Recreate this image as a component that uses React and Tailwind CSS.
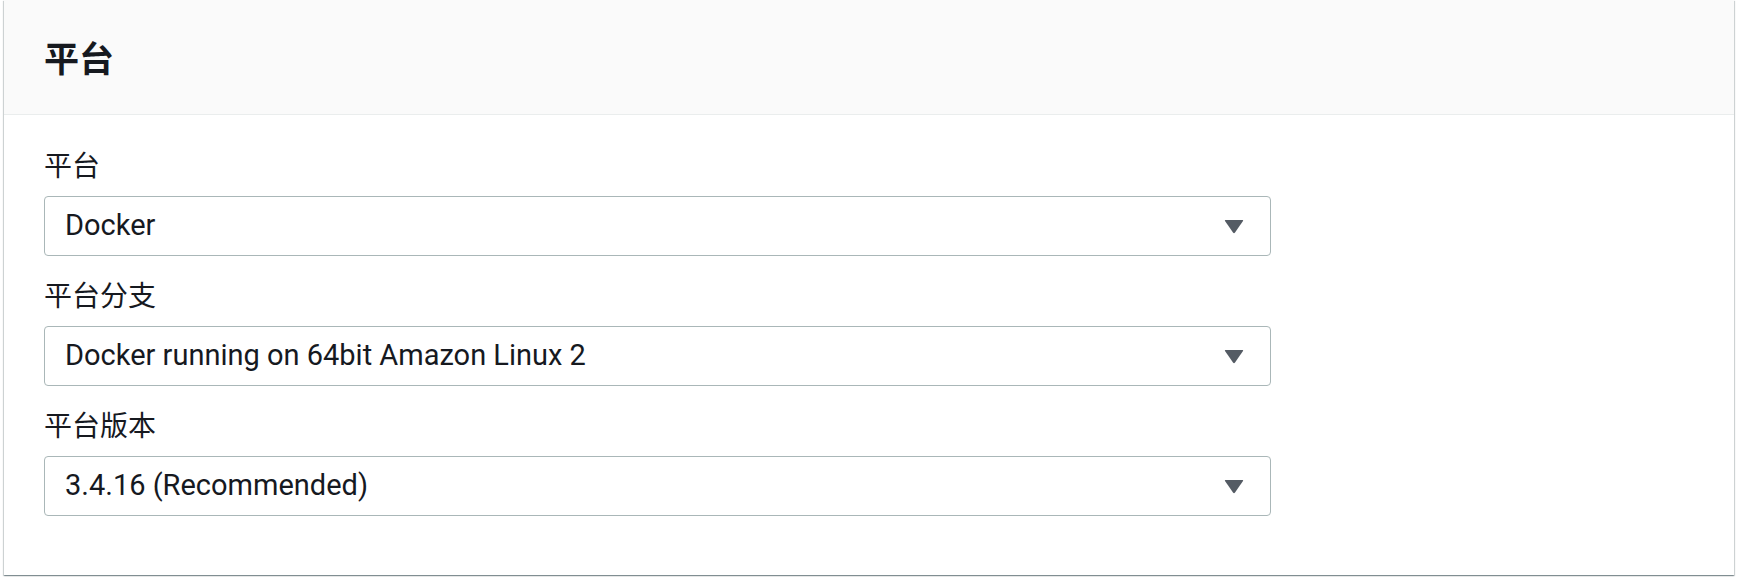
import React from 'react';

const fields = [
  { label: '平台', value: 'Docker' },
  { label: '平台分支', value: 'Docker running on 64bit Amazon Linux 2' },
  { label: '平台版本', value: '3.4.16 (Recommended)' },
];

function Caret() {
  return (
    <svg width="20" height="15" viewBox="0 0 20 15" className="shrink-0">
      <path d="M1.5 1 H18.5 Q19.6 1 19 2 L11 13.6 Q10 15 9 13.6 L1 2 Q0.4 1 1.5 1 Z" fill="#545b64" />
    </svg>
  );
}

function SelectField({ label, value }) {
  return (
    <div className="flex flex-col">
      <label className="h-[40px] leading-[40px] text-[28px] text-[#16191f] font-['Noto_Sans_CJK_SC',sans-serif]">
        {label}
      </label>
      <div className="mt-[12px] w-[1227px] h-[60px] flex items-center justify-between pl-[20px] pr-[26px] border border-[#aab7b8] rounded-[4px] bg-white">
        <span className="text-[29px] text-[#16191f] font-['Roboto','Noto_Sans_CJK_SC',sans-serif]">{value}</span>
        <Caret />
      </div>
    </div>
  );
}

export default function App() {
  return (
    <div className="w-[1738px] h-[578px] bg-white">
      <div className="ml-[4px] w-[1730px] h-[575px] bg-white shadow-[0_1px_1px_0_rgba(0,28,36,0.3),1px_1px_1px_0_rgba(0,28,36,0.15),-1px_1px_1px_0_rgba(0,28,36,0.15)] flex flex-col">
        {/* Header */}
        <div className="h-[115px] flex items-center pl-10 bg-[#fafafa] border-b border-[#eaeded]">
          <h2 className="text-[35px] font-bold text-[#16191f] font-['Noto_Sans_CJK_SC',sans-serif]">平台</h2>
        </div>

        {/* Body */}
        <div className="pl-10 pt-[29px] flex flex-col gap-[18px]">
          {fields.map((f) => (
            <SelectField key={f.label} label={f.label} value={f.value} />
          ))}
        </div>
      </div>
    </div>
  );
}
